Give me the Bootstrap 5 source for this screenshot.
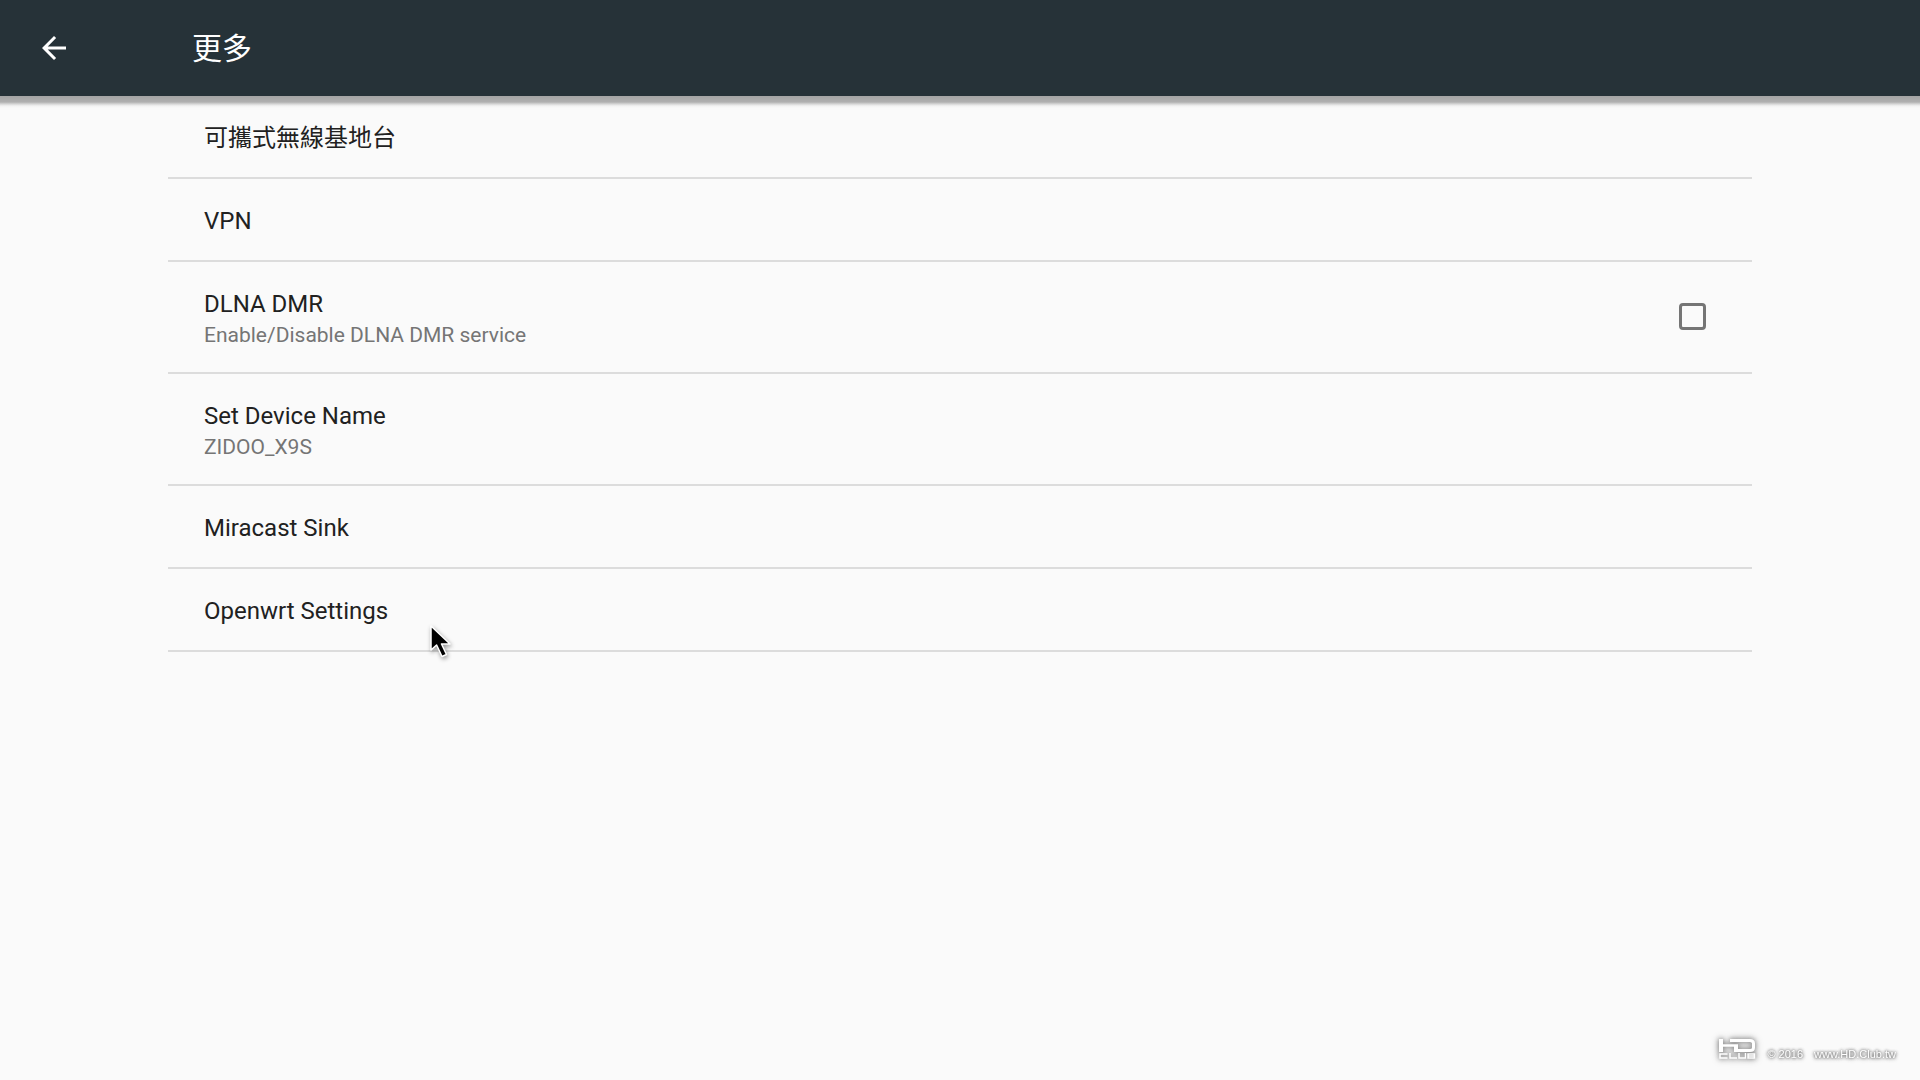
<!DOCTYPE html>
<html lang="zh-Hant">
<head>
<meta charset="utf-8">
<meta name="viewport" content="width=device-width, initial-scale=1">
<title>更多</title>
<link href="https://cdn.jsdelivr.net/npm/bootstrap@5.3.0/dist/css/bootstrap.min.css" rel="stylesheet">
<style>
  body { font-family: Roboto, "Noto Sans CJK TC", sans-serif; background: #fafafa; color: #212121; }
  .app-bar { height: 96px; padding: 0 36px; gap: 120px; background: #263238; color: #fff; }
  .app-bar::after { content: ""; position: absolute; left: 0; right: 0; top: 100%; height: 12px;
    background: linear-gradient(#a4a4a4 0, #b0b0b0 6px, #d6d6d6 8px, #f3f3f3 10px, #fafafa 12px); }
  .back-btn { width: 36px; height: 36px; color: #fff; }
  .app-title { padding-top: 2px; font-size: 30px; line-height: 36px; font-weight: 400; }
  .settings { margin: 0 8.75%; }
  .setting { min-height: 83px; padding: 26px 46px 0 36px; border-bottom: 2px solid #dcdcdc; color: #212121; text-decoration: none; }
  .setting.two-line { min-height: 112px; }
  .setting-name { font-size: 24px; line-height: 32px; }
  .setting-note { font-size: 21px; line-height: 30px; color: #757575; }
  .tick { appearance: none; width: 27px; height: 27px; margin: 15px 0 0; border: 3px solid #757575; border-radius: 4px; background: transparent; }
  .tick:checked { background: #757575; }
  .pointer { left: 428px; top: 622px; pointer-events: none; filter: drop-shadow(1px 2px 2px rgba(0,0,0,.4)); }
  .watermark { right: 24px; bottom: 18px; gap: 11px; color: #fff; font: 11px/16px "Liberation Sans", sans-serif;
    text-shadow: 0 0 3px #777, 0 0 3px #777, 0 1px 4px #999; }
  .watermark svg { margin-bottom: 3px; filter: drop-shadow(0 0 2px #888) drop-shadow(0 0 3px #aaa); }
</style>
<script src="https://cdn.jsdelivr.net/npm/bootstrap@5.3.0/dist/js/bootstrap.bundle.min.js" defer></script>
</head>
<body class="min-vh-100">
<header class="app-bar position-relative d-flex align-items-center">
  <button type="button" class="back-btn btn p-0 border-0 d-flex" aria-label="返回">
    <svg width="36" height="36" viewBox="0 0 24 24" fill="currentColor" aria-hidden="true"><path d="M20 11H7.83l5.59-5.59L12 4l-8 8 8 8 1.41-1.41L7.83 13H20v-2z"/></svg>
  </button>
  <h1 class="app-title mb-0">更多</h1>
</header>

<main class="settings d-flex flex-column">
  <a class="setting d-block" href="#"><span class="setting-name d-block">可攜式無線基地台</span></a>
  <a class="setting d-block" href="#"><span class="setting-name d-block">VPN</span></a>
  <label class="setting two-line d-flex justify-content-between align-items-start" for="dlna">
    <span>
      <span class="setting-name d-block">DLNA DMR</span>
      <span class="setting-note d-block">Enable/Disable DLNA DMR service</span>
    </span>
    <input class="tick" type="checkbox" id="dlna">
  </label>
  <a class="setting two-line d-block" href="#">
    <span class="setting-name d-block">Set Device Name</span>
    <span class="setting-note d-block">ZIDOO_X9S</span>
  </a>
  <a class="setting d-block" href="#"><span class="setting-name d-block">Miracast Sink</span></a>
  <a class="setting d-block" href="#"><span class="setting-name d-block">Openwrt Settings</span></a>
</main>

<svg class="pointer position-absolute" width="26" height="38" viewBox="0 0 26 38" aria-hidden="true">
  <path d="M3 4V28l5.600-5L14 34.500l4.500-2-5-10.500H22z" fill="#000" stroke="#fff" stroke-width="1.500" stroke-linejoin="round"/>
</svg>

<footer class="watermark position-fixed d-flex align-items-end">
  <svg width="37" height="20" viewBox="0 0 37 20" fill="none" stroke="#fff" role="img" aria-label="HD Club">
    <path stroke-width="4" d="M2 0v13M17 6v7"/>
    <path stroke-width="2.500" d="M2 6.500h17"/>
    <path stroke-width="3" d="M11 1.500h20q3.500 0 3.500 3v4q0 3-3.500 3H16"/>
    <path stroke-width="1.500" d="M8.500 15H1v4h7.500M11 14v5h7M20 14v5h6.500v-5M29 15h6.500v4H29zM29 17h6.500"/>
  </svg>
  <span>© 2016</span>
  <span>www.HD.Club.tw</span>
</footer>
</body>
</html>
